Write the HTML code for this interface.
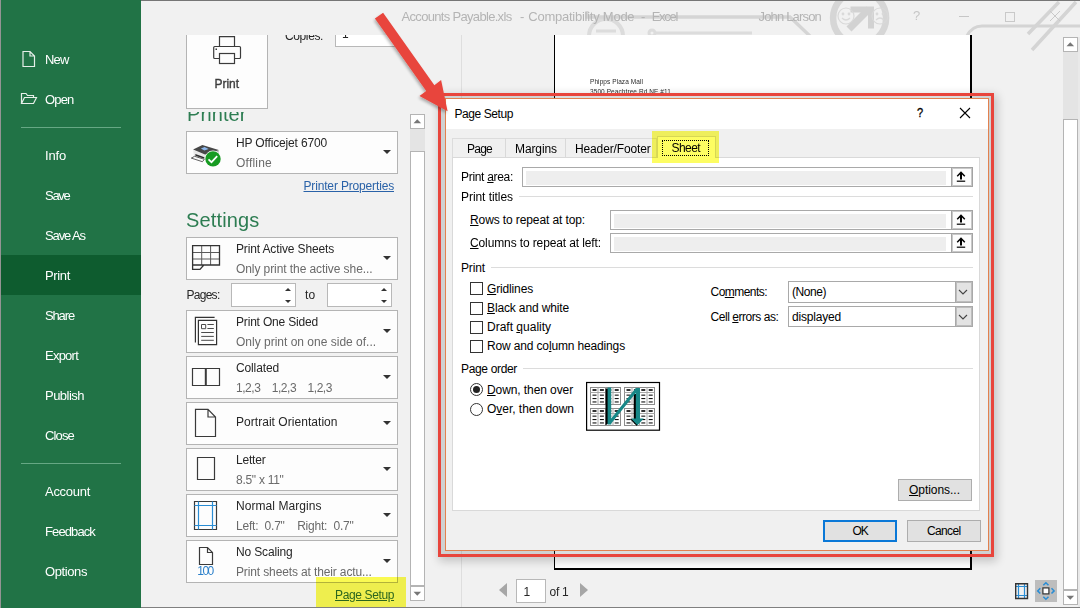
<!DOCTYPE html>
<html><head><meta charset="utf-8"><title>Page Setup</title>
<style>
*{box-sizing:border-box;margin:0;padding:0}
html,body{width:1080px;height:608px;overflow:hidden}
body{position:relative;background:#f1f1f1;font-family:"Liberation Sans",sans-serif;font-size:12px;color:#262626}
#root{position:absolute;left:0;top:0;width:1080px;height:608px;overflow:hidden}
#root div,#root span,#root svg,#root i,#root b,#root u{position:absolute;display:block;font-style:normal;font-weight:normal;text-decoration:none}
#root .t{white-space:pre;line-height:1}
#root svg{overflow:visible}
/* sidebar */
#side{left:0;top:0;width:141px;height:608px;background:#217346}
#side .t{left:45px;color:#fff;font-size:13px}
#sel{left:0;top:255px;width:141px;height:40px;background:#0e5c2f}
.sep{left:21px;width:100px;height:1.300px;background:#66a884;margin-top:-.200px}
/* settings boxes */
.box{left:186px;width:212px;height:43px;background:#fdfdfd;border:1px solid #b4b4b4}
.box .m{left:49px;top:5px;font-size:12px;color:#262626}
.box .s{left:49px;top:25px;font-size:12px;color:#6a6a6a}
.box .one{left:49px;top:13px;font-size:12px;color:#262626}
.box .dd{left:196px;top:18px;width:0;height:0;border-left:4px solid transparent;border-right:4px solid transparent;border-top:4px solid #333}
.spin{background:#fff;border:1px solid #b8b8b8;height:24px;top:283px;width:65px}
.spin i{left:53px;width:0;height:0;border-left:3px solid transparent;border-right:3px solid transparent}
.spin i.u{top:3.700px;border-bottom:3px solid #333}
.spin i.d{top:16.300px;border-top:3px solid #333}
.sbtn{background:#fff;border:1px solid #b4b4b4;width:15px;height:15px}
.sthumb{background:#fff;border:1px solid #b4b4b4}
/* dialog */
.inp{background:#fff;border:1px solid #a9a9a9}
.inp b{left:3px;top:2.800px;right:26px;bottom:.700px;background:#eeeeee}
.inp u{right:-1px;top:-1px;width:22px;bottom:-1px;background:#fcfcfc;border:1px solid #a3a3a3;box-shadow:inset 0 0 0 1px #c8c8c8}
.lbl{font-size:12px;color:#000}
.hr{height:1px;background:#dcdcdc}
.cb{width:13px;height:13px;border:1px solid #333;background:#fff}
.rb{width:13px;height:13px;border:1px solid #333;background:#fff;border-radius:50%}
.btn{background:#e1e1e1;border:1px solid #adadad}
.sel{background:#fff;border:1px solid #a9a9a9}
.sel .a{right:-1px;top:-1px;width:17.600px;bottom:-1px;background:#e3e3e3;border:1px solid #a9a9a9;box-shadow:inset 0 0 0 1px #bdbdbd}
.ul{text-decoration:underline !important;position:static !important;display:inline !important}
</style></head>
<body>
<div id="root">
<div id="main" style="left:141px;top:0;width:939px;height:608px;background:#f1f1f1"></div>
<!-- faint title-bar pattern -->
<svg style="left:141px;top:0" width="939" height="120" viewBox="141 0 939 120">
 <g fill="none" stroke="#dcdcdc" stroke-width="3">
  <circle cx="606" cy="36" r="17" stroke-width="4"></circle>
  <path d="M596 31H616 M596 37H616"></path>
  <circle cx="652" cy="33" r="3"></circle>
  <path d="M655 33H752"></path>
  <path d="M587 11V17H790L812 38" stroke="#d5d5d5" stroke-width="3.300"></path>
  <circle cx="859.600" cy="18" r="26.500" stroke="#d6d6d6" stroke-width="6.500"></circle>
  <path d="M849 29L869 9" stroke="#d2d2d2" stroke-width="7"></path>
  <path d="M850.500 9.500H871V28.500" stroke="#d2d2d2" stroke-width="6"></path>
  <path d="M1059 2L1028 34 M1076 2L1032 50" stroke="#d4d4d4" stroke-width="3.500"></path>
  <path d="M967 36Q972 26 982 26H1080" stroke="#d4d4d4" stroke-width="3.200"></path>
 </g>
</svg>
<!-- title text -->
<span class="t" style="left: 401.5px; top: 10px; font-size: 13px; color: rgb(180, 180, 180); letter-spacing: -0.68px;">Accounts Payable.xls</span>
<span class="t" style="left:520px;top:10px;font-size:13px;color:#b4b4b4">-</span>
<span class="t" style="left: 528.3px; top: 10px; font-size: 13px; color: rgb(180, 180, 180); letter-spacing: -0.25px;">Compatibility Mode</span>
<span class="t" style="left:641px;top:10px;font-size:13px;color:#b4b4b4">-</span>
<span class="t" style="left: 651.7px; top: 10px; font-size: 13px; color: rgb(180, 180, 180); letter-spacing: -1.26px;">Excel</span>
<span class="t" style="left: 758.5px; top: 10px; font-size: 13px; color: rgb(180, 180, 180); letter-spacing: -0.82px;">John Larson</span>
<svg style="left:836px;top:6px" width="60" height="22" viewBox="0 0 60 22" fill="none" stroke="#d9d9d9" stroke-width="1.2">
 <circle cx="10" cy="10" r="8"></circle><circle cx="7" cy="8" r=".8"></circle><circle cx="13" cy="8" r=".8"></circle><path d="M6 12Q10 16 14 12"></path>
 <circle cx="44" cy="10" r="8"></circle><circle cx="41" cy="8" r=".8"></circle><circle cx="47" cy="8" r=".8"></circle><path d="M40 14Q44 10 48 14"></path>
</svg>
<span class="t" style="left:913px;top:9px;font-size:13px;color:#c6c6c6">?</span>
<div style="left:958.500px;top:16px;width:10.500px;height:1px;background:#c6c6c6"></div>
<div style="left:1004.500px;top:11.500px;width:10.500px;height:10px;border:1px solid #c9c9c9"></div>
<svg style="left:1049px;top:10px" width="12" height="12" viewBox="0 0 12 12"><path d="M1 1L11 11M11 1L1 11" stroke="#c9c9c9" stroke-width="1"></path></svg>

<!-- print panel -->
<div style="left:186px;top:35px;width:82px;height:74px;background:#fdfdfd;border:1px solid #b4b4b4;border-top:none;z-index:2"></div>
<svg style="left:211px;top:35px;z-index:3" width="32" height="30" viewBox="211 35 32 30" fill="none" stroke="#3b3b3b" stroke-width="1.2">
 <path d="M219.500 46.500V36.700H234.500V46.500"></path><rect x="213.700" y="46.500" width="26.800" height="12" rx="1"></rect><rect x="219.500" y="53.500" width="15" height="10" fill="#fdfdfd"></rect><rect x="215.500" y="48.500" width="1.500" height="1.500" fill="#3b3b3b" stroke="none"></rect>
</svg>
<span class="t" style="left: 214.5px; top: 78px; font-size: 12px; color: rgb(60, 60, 60); z-index: 3; -webkit-text-stroke: 0.35px rgb(60, 60, 60); letter-spacing: -0.04px;">Print</span>
<!-- copies (clipped) -->
<div style="left:270px;top:35px;width:140px;height:14px;overflow:hidden">
 <span class="t" style="left: 15px; top: -4.7px; font-size: 12px; color: rgb(38, 38, 38); letter-spacing: -0.38px;">Copies:</span>
 <div style="left:65px;top:-11.500px;width:63px;height:23px;background:#fff;border:1px solid #b8b8b8"></div>
 <span class="t" style="left:72px;top:-7.500px;font-size:12px;color:#262626">1</span>
</div>
<!-- Printer heading (top hidden by button) -->
<div style="left:186px;top:111.500px;width:100px;height:16px;overflow:hidden">
 <span class="t" style="left: 1px; top: -7.5px; font-size: 20px; color: rgb(45, 125, 82); letter-spacing: 0.08px;">Printer</span>
</div>
<div class="box" style="top:131px">
 <span class="t m" style="letter-spacing: -0.15px;">HP Officejet 6700</span>
 <span class="t s" style="letter-spacing: 0.22px;">Offline</span>
 <i class="dd"></i>
 <svg style="left:0;top:0" width="40" height="41" viewBox="187 132 40 41">
  <path d="M209.800 153.600L218.700 149.900V155L209.800 160Z" fill="#b5b5b5"></path>
  <path d="M193.100 150L205 154.400L209.800 153.600V160L205 159.800L193.900 155.600Z" fill="#e9e9e9"></path>
  <path d="M193.100 149.600L202.400 145L218.700 149.900L209.800 153.800L205 154.500Z" fill="#484848"></path>
  <path d="M200.900 148.500L204.600 147.100L208.700 149.100L204.400 150.600Z" fill="#8db7ec"></path>
  <path d="M195.400 154.100L204.400 157.300V158.700L195.400 155.700Z" fill="#2e2e2e"></path>
  <path d="M191.300 158.100L194.600 156.300L204.400 159.300L202.400 161.700Z" fill="#fafafa" stroke="#3a3a3a" stroke-width=".800"></path>
  <circle cx="213" cy="158.900" r="8.300" fill="#fdfdfd"></circle><circle cx="213" cy="158.900" r="7.700" fill="#179b22"></circle>
  <path d="M208.500 159.300L211.500 162.200L217.200 156.200" fill="none" stroke="#fff" stroke-width="1.700"></path>
 </svg>
</div>
<span class="t" style="left: 303.5px; top: 180px; font-size: 12px; color: rgb(42, 98, 168); text-decoration: underline !important; letter-spacing: -0.16px;">Printer Properties</span>
<span class="t" style="left: 186px; top: 209.5px; font-size: 20px; color: rgb(45, 125, 82); letter-spacing: 0.15px;">Settings</span>

<div class="box" style="top:237px">
 <span class="t m" style="letter-spacing: -0.14px;">Print Active Sheets</span>
 <span class="t s" style="letter-spacing: -0.08px;">Only print the active she...</span>
 <i class="dd"></i>
 <svg style="left:0;top:0" width="40" height="41" viewBox="187 238 40 41" fill="none"><path d="M192.500 252.500H219.500 M192.500 259H219.500 M201.700 245.500V265 M210.600 245.500V265" stroke="#5a5a5a" stroke-width="1"></path><path d="M192.600 245.600H219.500V265H203.800L200 269.400H192.600Z M192.600 265H204" stroke="#333" stroke-width="1.300"></path></svg>
</div>
<span class="t" style="left: 186.5px; top: 289px; font-size: 12px; color: rgb(38, 38, 38); letter-spacing: -0.73px;">Pages:</span>
<div class="spin" style="left:231px"><i class="u"></i><i class="d"></i></div>
<span class="t" style="left: 305px; top: 289.3px; font-size: 12px; color: rgb(38, 38, 38); letter-spacing: 0.24px;">to</span>
<div class="spin" style="left:327px"><i class="u"></i><i class="d"></i></div>

<div class="box" style="top:310px">
 <span class="t m" style="letter-spacing: -0.18px;">Print One Sided</span>
 <span class="t s" style="letter-spacing: 0px;">Only print on one side of...</span>
 <i class="dd"></i>
 <svg style="left:0;top:0" width="40" height="41" viewBox="187 311 40 41" fill="none" stroke="#333" stroke-width="1.200"><path d="M195.400 342.500V317.400H214.600 M198.400 320.400H216.600V344.600H198.400Z"></path><path d="M201.500 324.500H205.700V328.700H201.500Z M207.400 324.500H213.800 M207.400 328.500H213.800 M201.200 332.500H213.800 M201.200 336.400H213.800 M201.200 340.300H213.800" stroke="#4a4a4a" stroke-width="1"></path></svg>
</div>
<div class="box" style="top:356px">
 <span class="t m" style="letter-spacing: -0.13px;">Collated</span>
 <span class="t s" style="letter-spacing: -0.47px;">1,2,3    1,2,3    1,2,3</span>
 <i class="dd"></i>
 <svg style="left:4px;top:9.8px" width="30" height="20" viewBox="0 0 30 20" fill="none" stroke="#3a3a3a" stroke-width="1.2"><path d="M1.500 1.500H28.500V18.500H1.500Z"></path><path d="M14.800 1.500V18.500" stroke-width="2"></path></svg>
</div>
<div class="box" style="top:402px">
 <span class="t one" style="letter-spacing: 0.04px;">Portrait Orientation</span>
 <i class="dd"></i>
 <svg style="left:7px;top:5.5px" width="24" height="30" viewBox="0 0 24 30" fill="none" stroke="#3a3a3a" stroke-width="1.2"><path d="M1.500 0.300H14L21.500 8V27.500H1.500Z M14 0.300V8H21.500"></path></svg>
</div>
<div class="box" style="top:448px">
 <span class="t m" style="letter-spacing: -0.2px;">Letter</span>
 <span class="t s" style="letter-spacing: -0.28px;">8.5" x 11"</span>
 <i class="dd"></i>
 <svg style="left:8.5px;top:7px" width="20" height="26" viewBox="0 0 20 26" fill="none" stroke="#3a3a3a" stroke-width="1.2"><path d="M1.500 1.500H18.500V23.500H1.500Z"></path></svg>
</div>
<div class="box" style="top:494px">
 <span class="t m" style="letter-spacing: 0.06px;">Normal Margins</span>
 <span class="t s" style="letter-spacing: -0.21px;">Left:  0.7"    Right:  0.7"</span>
 <i class="dd"></i>
 <svg style="left:6px;top:5px" width="26" height="32" viewBox="0 0 26 32" fill="none" stroke="#3a3a3a" stroke-width="1.2"><path d="M1.500 1.500H23.500V29.500H1.500Z"></path><path d="M5.500 1.500V29.500 M19.500 1.500V29.500 M1.500 5.500H23.500 M1.500 25.500H23.500" stroke="#2a8dd4"></path></svg>
</div>
<div class="box" style="top:540px">
 <span class="t m" style="letter-spacing: -0.15px;">No Scaling</span>
 <span class="t s" style="letter-spacing: -0.13px;">Print sheets at their actu...</span>
 <i class="dd"></i>
 <svg style="left:11px;top:5px" width="16" height="20" viewBox="0 0 16 20" fill="none" stroke="#3a3a3a" stroke-width="1.2"><path d="M1.500 1.500H9.500L14.500 6.500V18.500H1.500Z M9.500 1.500V6.500H14.500"></path></svg>
 <span class="t" style="left: 10.3px; top: 24.3px; font-size: 12px; color: rgb(42, 127, 201); letter-spacing: -1.51px;">100</span>
</div>
<!-- Page Setup link w/ highlight -->
<div style="left:315.500px;top:577px;width:90.500px;height:31px;background:#fcfc52;mix-blend-mode:multiply;filter:blur(.6px)"></div>
<span class="t" style="left: 335px; top: 588.5px; font-size: 12px; color: rgb(44, 102, 30); text-decoration: underline !important; letter-spacing: -0.37px;">Page Setup</span>

<!-- left scrollbar -->
<div style="left:410px;top:114px;width:15px;height:487px;background:#e4e4e4"></div>
<div class="sbtn" style="left:410px;top:114px"></div>
<svg style="left:410px;top:114px" width="15" height="15" viewBox="0 0 15 15"><path d="M3.500 9.300L7.300 5.300L11.100 9.300Z" fill="#777"></path></svg>
<div class="sthumb" style="left:410px;top:151px;width:15px;height:435px"></div>
<div class="sbtn" style="left:410px;top:585.500px"></div>
<svg style="left:410px;top:585.500px" width="15" height="15" viewBox="0 0 15 15"><path d="M3.500 5.700L7.300 9.700L11.100 5.700Z" fill="#777"></path></svg>
<!-- divider -->
<div style="left:461px;top:35px;width:1px;height:573px;background:#dedede"></div>

<!-- preview page -->
<div style="left:553.800px;top:34.600px;width:418.300px;height:535.300px;background:#fff;border:solid #000;border-width:0 2.200px 2px 1.400px"></div>
<span class="t" style="left: 590px; top: 79px; font-size: 6.5px; color: rgb(42, 42, 42); letter-spacing: 0.08px;">Phipps Plaza Mall</span>
<span class="t" style="left: 590px; top: 89.3px; font-size: 6.5px; color: rgb(42, 42, 42); letter-spacing: 0.08px;">3500 Peachtree Rd NE #11</span>

<!-- pager -->
<i style="left:499px;top:583px;border-top:7.5px solid transparent;border-bottom:7.5px solid transparent;border-right:8px solid #a6a6a6"></i>
<div style="left:516px;top:579px;width:30px;height:24px;background:#fff;border:1px solid #b8b8b8"></div>
<span class="t" style="left:523.500px;top:585.500px;font-size:12px;color:#262626">1</span>
<span class="t" style="left: 549.5px; top: 585.5px; font-size: 12px; color: rgb(38, 38, 38); letter-spacing: -0.25px;">of 1</span>
<i style="left:580px;top:583px;border-top:7.500px solid transparent;border-bottom:7.500px solid transparent;border-left:8px solid #a6a6a6"></i>

<!-- right scrollbar -->
<div style="left:1063px;top:37px;width:15px;height:568px;background:#e4e4e4"></div>
<div class="sbtn" style="left:1063px;top:37px"></div>
<svg style="left:1063px;top:37px" width="15" height="15" viewBox="0 0 15 15"><path d="M3.500 9.300L7.300 5.300L11.100 9.300Z" fill="#777"></path></svg>
<div class="sthumb" style="left:1063px;top:119px;width:15px;height:471px"></div>
<div class="sbtn" style="left:1063px;top:589.500px"></div>
<svg style="left:1063px;top:589.500px" width="15" height="15" viewBox="0 0 15 15"><path d="M3.500 5.700L7.300 9.700L11.100 5.700Z" fill="#777"></path></svg>
<!-- bottom-right icons -->
<svg style="left:1014px;top:582px" width="16" height="19" viewBox="0 0 16 19" fill="none" stroke="#333" stroke-width="1.400"><path d="M4.500 1.500V16.500 M10.500 1.500V16.500 M1.500 4.500H13.500 M1.500 13.500H13.500" stroke="#2a8dd4" stroke-width="1.200"></path><path d="M1.700 1.700H13.500V16.500H1.700Z"></path></svg>
<div style="left:1035px;top:580px;width:22px;height:22px;background:#bdbdbd"></div>
<svg style="left:1035px;top:580px" width="22" height="22" viewBox="0 0 22 22" fill="none"><rect x="7.900" y="7.900" width="6" height="6" fill="#fff" stroke="#333" stroke-width="1.200"></rect><path d="M8.300 5.300L10.900 2.700L13.500 5.300 M8.300 16.700L10.900 19.300L13.500 16.700 M5.300 8.300L2.700 10.900L5.300 13.500 M16.500 8.300L19.100 10.900L16.500 13.500" stroke="#2a8dd4" stroke-width="1.500"></path></svg>
<!-- window bottom/right border -->
<div style="left:0;top:606.800px;width:1080px;height:2px;background:#808080"></div>
<div style="left:0;top:0;width:1080px;height:1px;background:#767676"></div>
<div style="left:1078px;top:37px;width:2px;height:570px;background:#e9e9e9"></div>

<div id="side">
 <div id="sel"></div>
 <div class="sep" style="top:127px"></div>
 <div class="sep" style="top:463px"></div>
 <svg style="left:22px;top:50px" width="14" height="18" viewBox="0 0 14 18"><path d="M1 1.5H8L12.5 6V16.5H1Z M8 1.5V6H12.5" fill="none" stroke="#e6efe9" stroke-width="1.200"></path></svg>
 <svg style="left:20px;top:92px" width="18" height="13" viewBox="0 0 18 13"><path d="M1.5 11.5V1.5H6L7.5 3.5H13.5V5.5 M1.5 11.5L4.5 5.5H16.5L13.5 11.5Z" fill="none" stroke="#e6efe9" stroke-width="1.200"></path></svg>
 <span class="t" style="top: 53px; letter-spacing: -0.84px;">New</span>
 <span class="t" style="top: 92.5px; letter-spacing: -0.83px;">Open</span>
 <span class="t" style="top: 149px; letter-spacing: -0.17px;">Info</span>
 <span class="t" style="top: 189px; letter-spacing: -1.29px;">Save</span>
 <span class="t" style="top: 229px; letter-spacing: -1.1px;">Save As</span>
 <span class="t" style="top: 269px; letter-spacing: -0.35px;">Print</span>
 <span class="t" style="top: 309px; letter-spacing: -1.14px;">Share</span>
 <span class="t" style="top: 349px; letter-spacing: -0.76px;">Export</span>
 <span class="t" style="top: 389px; letter-spacing: -0.52px;">Publish</span>
 <span class="t" style="top: 429px; letter-spacing: -0.85px;">Close</span>
 <span class="t" style="top: 485px; letter-spacing: -0.28px;">Account</span>
 <span class="t" style="top: 525px; letter-spacing: -0.89px;">Feedback</span>
 <span class="t" style="top: 565px; letter-spacing: -0.4px;">Options</span>
</div>
<div style="left:0;top:0;width:1.300px;height:608px;background:#949494"></div>

<!-- red annotation border + shadow -->
<div style="left:438px;top:93px;width:556px;height:464px;background:rgba(40,55,60,.17);border:3px solid #e8453c;box-shadow:2px 3px 9px 1px rgba(0,0,0,.2)"></div>
<!-- dialog window -->
<div id="dlg" style="left:445px;top:98px;width:544px;height:453px;background:#f0f0f0;border:1px solid #e2814f"></div>
<div style="left:446px;top:99px;width:542px;height:30px;background:#fff"></div>
<span class="t lbl" style="left: 454.5px; top: 108px; letter-spacing: -0.42px;">Page Setup</span>
<span class="t" style="left:917px;top:106.200px;font-size:13px;color:#000;-webkit-text-stroke:.3px #000;transform:scaleX(.85);transform-origin:0 0">?</span>
<svg style="left:959px;top:107px" width="12" height="12" viewBox="0 0 12 12"><path d="M1 1L11 11M11 1L1 11" stroke="#000" stroke-width="1.100"></path></svg>

<!-- tabs -->
<div style="left:452px;top:138px;width:205px;height:20px;border:1px solid #dcdcdc;border-bottom:none;background:#f0f0f0"></div>
<div style="left:505px;top:138px;width:1px;height:19px;background:#d9d9d9"></div>
<div style="left:565px;top:138px;width:1px;height:19px;background:#d9d9d9"></div>
<!-- tab pane -->
<div style="left:452px;top:157px;width:528px;height:354px;background:#fff;border:1px solid #d9d9d9"></div>
<!-- Sheet tab + highlight -->
<div style="left:656.500px;top:136px;width:59px;height:21.500px;background:#fff;border:1px solid #d9d9d9;border-bottom:none"></div>
<div style="left:652px;top:131px;width:67px;height:32px;background:#fdfd62;mix-blend-mode:multiply;filter:blur(.5px)"></div>
<div style="left:662px;top:140px;width:46.500px;height:16px;border:1px dotted #000"></div>
<span class="t lbl" style="left: 467px; top: 143px; letter-spacing: -0.76px;">Page</span>
<span class="t lbl" style="left: 515px; top: 143px; letter-spacing: -0.1px;">Margins</span>
<span class="t lbl" style="left: 575px; top: 143px; letter-spacing: -0.14px;">Header/Footer</span>
<span class="t lbl" style="left: 671.5px; top: 141.5px; letter-spacing: -0.57px;">Sheet</span>

<!-- Print area -->
<span class="t lbl" style="left: 461px; top: 170.5px; letter-spacing: -0.31px;">Print <span class="ul">a</span>rea:</span>
<div class="inp" style="left:521.500px;top:167px;width:451.200px;height:19.700px"><b></b><u><svg style="left:4.200px;top:2.500px" width="10" height="12" viewBox="0 0 10 12"><path d="M5 0.300L9.300 4.800L8.300 5.800L6 3.500V8.400H4V3.500L1.700 5.800L0.700 4.800Z" fill="#000"></path><rect x="0.800" y="9.600" width="8.400" height="1.200" fill="#000"></rect></svg></u></div>
<span class="t lbl" style="left: 461px; top: 190.5px; letter-spacing: -0.06px;">Print titles</span>
<div class="hr" style="left:519px;top:196px;width:454px"></div>
<span class="t lbl" style="left: 470px; top: 214px; letter-spacing: -0.11px;"><span class="ul">R</span>ows to repeat at top:</span>
<div class="inp" style="left:610px;top:210px;width:362.700px;height:19.600px"><b></b><u><svg style="left:4.200px;top:2.500px" width="10" height="12" viewBox="0 0 10 12"><path d="M5 0.300L9.300 4.800L8.300 5.800L6 3.500V8.400H4V3.500L1.700 5.800L0.700 4.800Z" fill="#000"></path><rect x="0.800" y="9.600" width="8.400" height="1.200" fill="#000"></rect></svg></u></div>
<span class="t lbl" style="left: 470px; top: 237px; letter-spacing: -0.12px;"><span class="ul">C</span>olumns to repeat at left:</span>
<div class="inp" style="left:610px;top:233.200px;width:362.700px;height:19.600px"><b></b><u><svg style="left:4.200px;top:2.500px" width="10" height="12" viewBox="0 0 10 12"><path d="M5 0.300L9.300 4.800L8.300 5.800L6 3.500V8.400H4V3.500L1.700 5.800L0.700 4.800Z" fill="#000"></path><rect x="0.800" y="9.600" width="8.400" height="1.200" fill="#000"></rect></svg></u></div>

<!-- Print group -->
<span class="t lbl" style="left: 461px; top: 261.5px; letter-spacing: -0.14px;">Print</span>
<div class="hr" style="left:491px;top:267px;width:482px"></div>
<div class="cb" style="left:470px;top:282px"></div>
<div class="cb" style="left:470px;top:301.500px"></div>
<div class="cb" style="left:470px;top:320.500px"></div>
<div class="cb" style="left:470px;top:339.500px"></div>
<span class="t lbl" style="left: 487px; top: 282.5px; letter-spacing: -0.15px;"><span class="ul">G</span>ridlines</span>
<span class="t lbl" style="left: 487px; top: 302px; letter-spacing: -0.14px;"><span class="ul">B</span>lack and white</span>
<span class="t lbl" style="left: 487px; top: 321px; letter-spacing: 0px;">Draft <span class="ul">q</span>uality</span>
<span class="t lbl" style="left: 487px; top: 340px; letter-spacing: -0.15px;">Row and co<span class="ul">l</span>umn headings</span>
<span class="t lbl" style="left: 710.5px; top: 285.5px; letter-spacing: -0.54px;">Co<span class="ul">m</span>ments:</span>
<span class="t lbl" style="left: 710.5px; top: 310.5px; letter-spacing: -0.45px;">Cell <span class="ul">e</span>rrors as:</span>
<div class="sel" style="left:788px;top:281.200px;width:184.700px;height:21.400px"><div class="a"></div></div>
<div class="sel" style="left:788px;top:306px;width:184.700px;height:21.400px"><div class="a"></div></div>
<svg style="left:957.700px;top:289px" width="10" height="7" viewBox="0 0 10 7"><path d="M1 1L5 5L9 1" fill="none" stroke="#444" stroke-width="1.100"></path></svg>
<svg style="left:957.700px;top:314px" width="10" height="7" viewBox="0 0 10 7"><path d="M1 1L5 5L9 1" fill="none" stroke="#444" stroke-width="1.100"></path></svg>
<span class="t lbl" style="left: 792px; top: 285.5px; letter-spacing: -0.45px;">(None)</span>
<span class="t lbl" style="left: 792px; top: 310.5px; letter-spacing: -0.19px;">displayed</span>

<!-- Page order -->
<span class="t lbl" style="left: 461px; top: 363px; letter-spacing: -0.34px;">Page order</span>
<div class="hr" style="left:523px;top:368px;width:450px"></div>
<div class="rb" style="left:470px;top:383px"></div>
<div style="left:473px;top:386px;width:7px;height:7px;border-radius:50%;background:#222"></div>
<div class="rb" style="left:470px;top:402.500px"></div>
<span class="t lbl" style="left: 487px; top: 383.5px; letter-spacing: -0.09px;"><span class="ul">D</span>own, then over</span>
<span class="t lbl" style="left: 487px; top: 403px; letter-spacing: -0.03px;">O<span class="ul">v</span>er, then down</span>
<!--PO1--><svg style="left:585px;top:381px" width="77" height="52" viewBox="585 381 77 52">
<rect x="586.600" y="382.500" width="72.900" height="47.700" fill="#fff" stroke="#000" stroke-width="1.200"></rect>
<rect x="590.5" y="387.5" width="30" height="17" fill="#fff" stroke="#8c8c8c" stroke-width="1"></rect>
<path d="M590.5 392.5H620.5 M598 387.5V404.5 M605.5 387.5V404.5 M613 387.5V404.5" stroke="#a8a8a8" stroke-width="1" fill="none"></path>
<rect x="592.5" y="389.2" width="4" height="1.600" fill="#000"></rect>
<rect x="592.5" y="394.6" width="4" height="1.100" fill="#111"></rect>
<rect x="592.5" y="398.0" width="4" height="1.100" fill="#111"></rect>
<rect x="592.5" y="401.4" width="4" height="1.100" fill="#111"></rect>
<rect x="599.9" y="389.2" width="4" height="1.600" fill="#000"></rect>
<rect x="599.9" y="394.6" width="4" height="1.100" fill="#111"></rect>
<rect x="599.9" y="398.0" width="4" height="1.100" fill="#111"></rect>
<rect x="599.9" y="401.4" width="4" height="1.100" fill="#111"></rect>
<rect x="607.3" y="389.2" width="4" height="1.600" fill="#000"></rect>
<rect x="607.3" y="394.6" width="4" height="1.100" fill="#111"></rect>
<rect x="607.3" y="398.0" width="4" height="1.100" fill="#111"></rect>
<rect x="607.3" y="401.4" width="4" height="1.100" fill="#111"></rect>
<rect x="614.7" y="389.2" width="4" height="1.600" fill="#000"></rect>
<rect x="614.7" y="394.6" width="4" height="1.100" fill="#111"></rect>
<rect x="614.7" y="398.0" width="4" height="1.100" fill="#111"></rect>
<rect x="614.7" y="401.4" width="4" height="1.100" fill="#111"></rect>
<rect x="624.5" y="387.5" width="30" height="17" fill="#fff" stroke="#8c8c8c" stroke-width="1"></rect>
<path d="M624.5 392.5H654.5 M632 387.5V404.5 M639.5 387.5V404.5 M647 387.5V404.5" stroke="#a8a8a8" stroke-width="1" fill="none"></path>
<rect x="626.5" y="389.2" width="4" height="1.600" fill="#000"></rect>
<rect x="626.5" y="394.6" width="4" height="1.100" fill="#111"></rect>
<rect x="626.5" y="398.0" width="4" height="1.100" fill="#111"></rect>
<rect x="626.5" y="401.4" width="4" height="1.100" fill="#111"></rect>
<rect x="633.9" y="389.2" width="4" height="1.600" fill="#000"></rect>
<rect x="633.9" y="394.6" width="4" height="1.100" fill="#111"></rect>
<rect x="633.9" y="398.0" width="4" height="1.100" fill="#111"></rect>
<rect x="633.9" y="401.4" width="4" height="1.100" fill="#111"></rect>
<rect x="641.3" y="389.2" width="4" height="1.600" fill="#000"></rect>
<rect x="641.3" y="394.6" width="4" height="1.100" fill="#111"></rect>
<rect x="641.3" y="398.0" width="4" height="1.100" fill="#111"></rect>
<rect x="641.3" y="401.4" width="4" height="1.100" fill="#111"></rect>
<rect x="648.7" y="389.2" width="4" height="1.600" fill="#000"></rect>
<rect x="648.7" y="394.6" width="4" height="1.100" fill="#111"></rect>
<rect x="648.7" y="398.0" width="4" height="1.100" fill="#111"></rect>
<rect x="648.7" y="401.4" width="4" height="1.100" fill="#111"></rect>
<rect x="590.5" y="408.5" width="30" height="17" fill="#fff" stroke="#8c8c8c" stroke-width="1"></rect>
<path d="M590.5 413.5H620.5 M598 408.5V425.5 M605.5 408.5V425.5 M613 408.5V425.5" stroke="#a8a8a8" stroke-width="1" fill="none"></path>
<rect x="592.5" y="410.2" width="4" height="1.600" fill="#000"></rect>
<rect x="592.5" y="415.6" width="4" height="1.100" fill="#111"></rect>
<rect x="592.5" y="419.0" width="4" height="1.100" fill="#111"></rect>
<rect x="592.5" y="422.4" width="4" height="1.100" fill="#111"></rect>
<rect x="599.9" y="410.2" width="4" height="1.600" fill="#000"></rect>
<rect x="599.9" y="415.6" width="4" height="1.100" fill="#111"></rect>
<rect x="599.9" y="419.0" width="4" height="1.100" fill="#111"></rect>
<rect x="599.9" y="422.4" width="4" height="1.100" fill="#111"></rect>
<rect x="607.3" y="410.2" width="4" height="1.600" fill="#000"></rect>
<rect x="607.3" y="415.6" width="4" height="1.100" fill="#111"></rect>
<rect x="607.3" y="419.0" width="4" height="1.100" fill="#111"></rect>
<rect x="607.3" y="422.4" width="4" height="1.100" fill="#111"></rect>
<rect x="614.7" y="410.2" width="4" height="1.600" fill="#000"></rect>
<rect x="614.7" y="415.6" width="4" height="1.100" fill="#111"></rect>
<rect x="614.7" y="419.0" width="4" height="1.100" fill="#111"></rect>
<rect x="614.7" y="422.4" width="4" height="1.100" fill="#111"></rect>
<rect x="624.5" y="408.5" width="30" height="17" fill="#fff" stroke="#8c8c8c" stroke-width="1"></rect>
<path d="M624.5 413.5H654.5 M632 408.5V425.5 M639.5 408.5V425.5 M647 408.5V425.5" stroke="#a8a8a8" stroke-width="1" fill="none"></path>
<rect x="626.5" y="410.2" width="4" height="1.600" fill="#000"></rect>
<rect x="626.5" y="415.6" width="4" height="1.100" fill="#111"></rect>
<rect x="626.5" y="419.0" width="4" height="1.100" fill="#111"></rect>
<rect x="626.5" y="422.4" width="4" height="1.100" fill="#111"></rect>
<rect x="633.9" y="410.2" width="4" height="1.600" fill="#000"></rect>
<rect x="633.9" y="415.6" width="4" height="1.100" fill="#111"></rect>
<rect x="633.9" y="419.0" width="4" height="1.100" fill="#111"></rect>
<rect x="633.9" y="422.4" width="4" height="1.100" fill="#111"></rect>
<rect x="641.3" y="410.2" width="4" height="1.600" fill="#000"></rect>
<rect x="641.3" y="415.6" width="4" height="1.100" fill="#111"></rect>
<rect x="641.3" y="419.0" width="4" height="1.100" fill="#111"></rect>
<rect x="641.3" y="422.4" width="4" height="1.100" fill="#111"></rect>
<rect x="648.7" y="410.2" width="4" height="1.600" fill="#000"></rect>
<rect x="648.7" y="415.6" width="4" height="1.100" fill="#111"></rect>
<rect x="648.7" y="419.0" width="4" height="1.100" fill="#111"></rect>
<rect x="648.7" y="422.4" width="4" height="1.100" fill="#111"></rect>
<path d="M605.500 388.500V425.500L608 423.500V388.500Z" fill="#000"></path>
<path d="M633.700 394V419.500L629.800 418.800L636.800 426L638 424V394Z" fill="#000"></path>
<path d="M607.600 387.500H611.200V418.500L635.800 388H640V418.500H643.800L637.500 425.200L631 418.500H635.800V393L611.200 423.500V424.500H607.600Z" fill="#178787"></path>
</svg><!--PO2-->

<!-- buttons -->
<div class="btn" style="left:898px;top:479px;width:74px;height:22px"></div>
<span class="t lbl" style="left: 909px; top: 484px; letter-spacing: -0.04px;"><span class="ul">O</span>ptions...</span>
<div class="btn" style="left:823px;top:520px;width:74px;height:22px;border:2px solid #0a78d7"></div>
<span class="t lbl" style="left: 852.5px; top: 525px; letter-spacing: -1.17px;">OK</span>
<div class="btn" style="left:907px;top:520px;width:74px;height:22px"></div>
<span class="t lbl" style="left: 927px; top: 525px; letter-spacing: -0.64px;">Cancel</span>

<!-- red arrow -->
<svg style="left:340px;top:0" width="140" height="130" viewBox="340 0 140 130">
 <defs><filter id="sh" x="-20%" y="-20%" width="150%" height="150%"><feGaussianBlur in="SourceAlpha" stdDeviation="1.800"></feGaussianBlur><feOffset dx="-1" dy="2"></feOffset><feComponentTransfer><feFuncA type="linear" slope=".3"></feFuncA></feComponentTransfer><feMerge><feMergeNode></feMergeNode><feMergeNode in="SourceGraphic"></feMergeNode></feMerge></filter></defs>
 <polygon filter="url(#sh)" fill="#e8453c" points="383.100,12.800 374.900,18.600 426.200,91 419.500,96 447.600,111.300 441.100,80 434.400,85.200"></polygon>
</svg>

</div>

</body></html>
